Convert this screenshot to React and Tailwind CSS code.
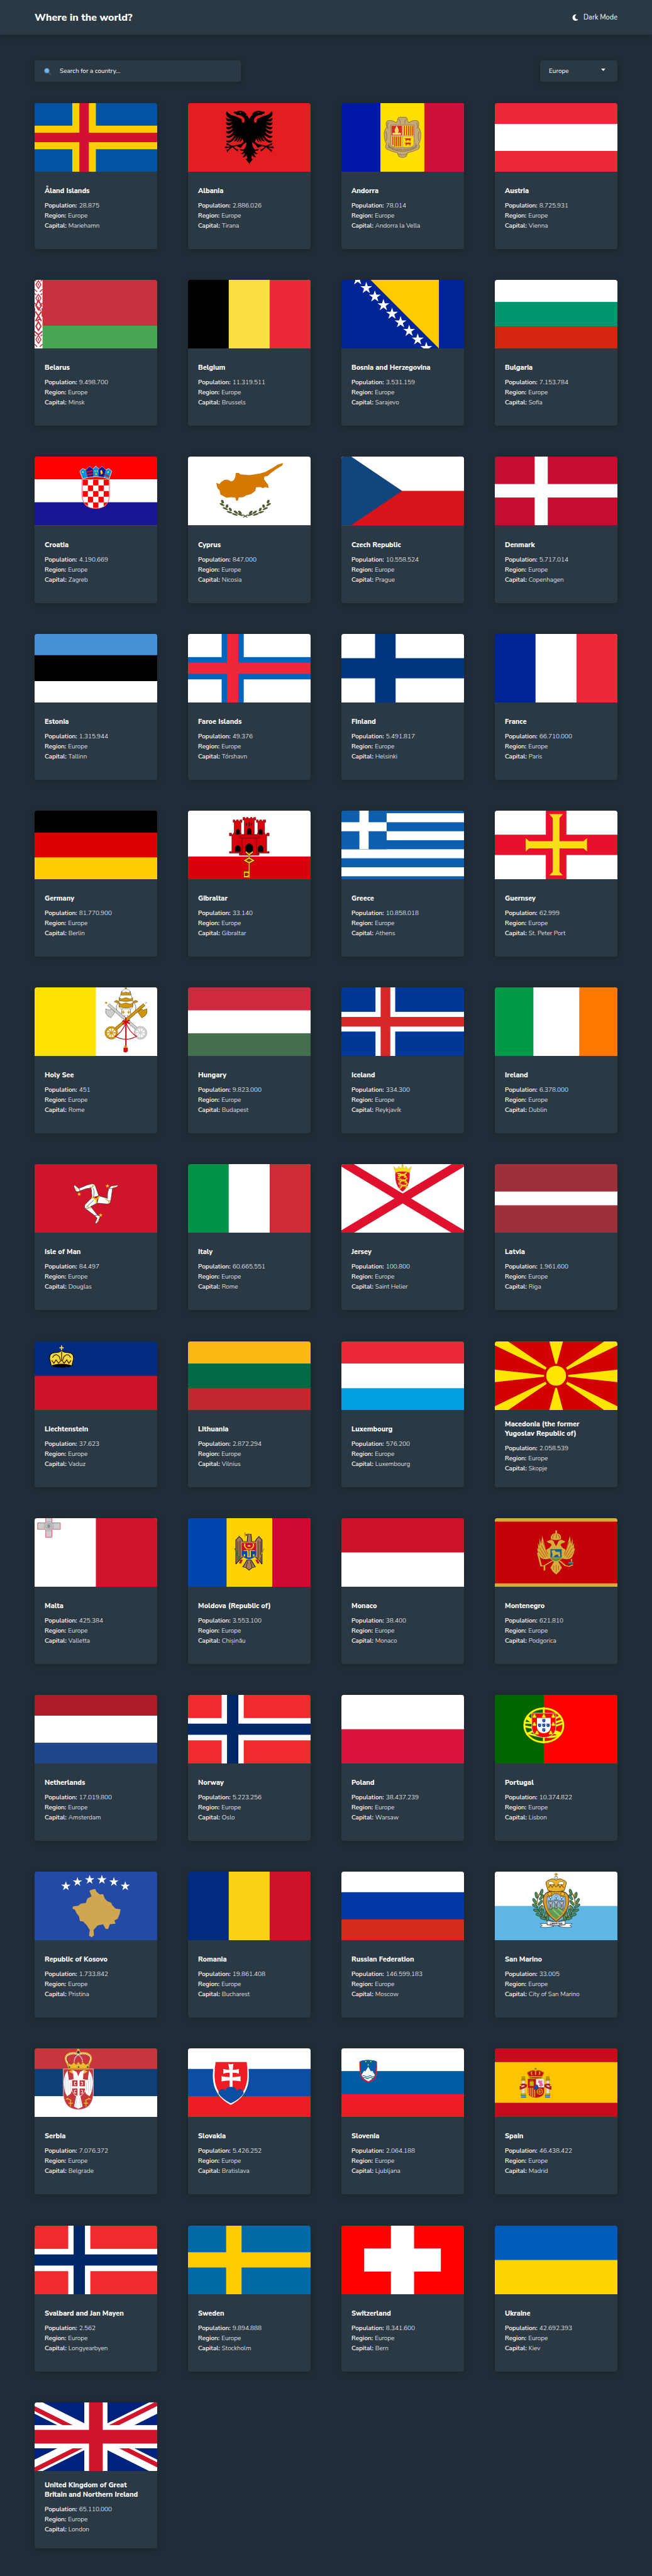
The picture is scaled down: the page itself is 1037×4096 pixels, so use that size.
import React from "react";
import { FaMoon } from "react-icons/fa";

/* Every flag is drawn on a 286 x 160 canvas. */

const R = ({ x = 0, y = 0, w = 286, h = 160, f, ...rest }) => (
  <rect x={x} y={y} width={w} height={h} fill={f} {...rest} />
);

// Horizontal bands: a = end of the first band, b = end of the second.
const Rows = ({ c, a, b = 160 }) => (
  <>
    <R f={c[0]} />
    <R y={a} h={160 - a} f={c[1]} />
    {c[2] && <R y={b} h={160 - b} f={c[2]} />}
  </>
);

const Cols = ({ c, a, b = 286 }) => (
  <>
    <R f={c[0]} />
    <R x={a} w={286 - a} f={c[1]} />
    {c[2] && <R x={b} w={286 - b} f={c[2]} />}
  </>
);

const Cross = ({ x1, x2, y1, y2, f }) => (
  <>
    <R x={x1} w={x2 - x1} f={f} />
    <R y={y1} h={y2 - y1} f={f} />
  </>
);

const Mirror = ({ cx, children }) => (
  <>
    {children}
    <g transform={`translate(${cx * 2} 0) scale(-1 1)`}>{children}</g>
  </>
);

const Star = ({ cx, cy, r, f = "#fff", ...rest }) => {
  const pts = Array.from({ length: 10 }, (_, i) => {
    const q = i % 2 ? r * 0.382 : r;
    const a = (Math.PI * i) / 5 - Math.PI / 2;
    return `${(cx + q * Math.cos(a)).toFixed(2)},${(cy + q * Math.sin(a)).toFixed(2)}`;
  }).join(" ");
  return <polygon points={pts} fill={f} {...rest} />;
};

const NorwayFlag = () => (
  <>
    <R f="#ef2b2d" />
    <Cross x1={78.5} x2={130} y1={54} y2={106} f="#fff" />
    <Cross x1={91} x2={117.5} y1={67} y2={93} f="#002868" />
  </>
);

const AlbaniaFlag = () => (
  <>
    <R f="#e41e20" />
    <Mirror cx={143}>
      <path d="M143.5 37 L138 29 L134 28 L137 26 L131 20 Q122 16 115 19 L107 20 Q106 25 113 25 L112 27 L120 28 Q130 31 132 38 Q133 45 129 46 Q125 46 125 37 L110 30 Q96 28 91 19 Q87 23 90 29 Q95 37 103 37 Q94 38 89 34 Q88 42 96 43 L104 42 Q95 48 89 44 Q88 52 97 52 L105 49 Q97 58 89 55 Q89 62 97 61 L106 57 Q98 68 89 65 Q89 72 97 71 L107 65 Q99 79 89 76 Q89 82 97 81 L109 74 Q100 91 89 87 Q90 93 97 92 Q106 89 113 77 Q112 84 107 89 Q114 91 118 79 Q118 87 113 90 Q119 92 123 79 Q123 87 119 91 Q124 91 127 83 L130 90 L124 95 L113 98 L115 101 L123 104 Q128 96 136 91 Q137 102 130 108 L121 107 Q122 112 130 111 Q128 117 123 117 Q126 121 133 116 Q131 124 127 125 Q133 128 137 120 Q137 127 139 128 L135 131 L143.5 142 Z" fill="#000" />
      <path d="M118 98 L87 104 M104 101 L92 96 M104 101 L91 111 M104 101 L114 110" stroke="#000" strokeWidth="2.6" fill="none" />
      <path d="M85 103 l5 -3 l1 5z M89 93 l6 2 l-4 4z M90 108 l6 1 l-5 6z M111 107 l6 1 l-2 5z" fill="#000" />
      <circle cx="122" cy="22" r="1.4" fill="#e41e20" />
    </Mirror>
  </>
);

const AndorraFlag = () => (
  <>
    <Cols c={["#0018a8", "#fedf00", "#d0103a"]} a={91} b={193.5} />
    <path d="M142.500 33 Q130 31 131 41 L128 46 Q118 38 108 41 Q102 46 106 56 Q99 64 100 76 Q101 88 105 95 Q100 104 107 108 Q118 113 131 116 Q131 126 142.500 127 Q154 126 154 116 Q167 113 178 108 Q185 104 180 95 Q185 88 185 76 Q186 64 179 56 Q183 46 177 41 Q167 38 157 46 L154 41 Q155 31 142.500 33Z" fill="#c6aa76" stroke="#8f744a" strokeWidth="1.5" />
    <Mirror cx={142.5}>
      <path d="M110 45 Q105 52 109 60 M104 66 Q108 78 104 88 M108 98 Q120 108 142 108 M134 38 Q138 42 137 48 M108 104 Q114 100 110 94 M133 118 Q138 122 142 120" fill="none" stroke="#8f744a" strokeWidth="1.5" />
    </Mirror>
    <path d="M115 51 H170 V97 Q168 103 156 104 H129 Q117 103 115 97Z" fill="#c7b37f" stroke="#8a7350" strokeWidth="1" />
    <R x={117} y={53} w={24} h={22} f="#d52b1e" />
    <R x={144} y={53} w={24} h={22} f="#fedf00" />
    <path d="M117 78 H141 V102 H129 Q118 101 117 96Z M144 78 H168 V96 Q167 101 156 102 H144Z" fill="#fedf00" />
    <path d="M147 53 V75 M152 53 V75 M157 53 V75 M162 53 V75 M166.500 53 V75 M120 78 V98 M124.500 78 V101 M129 78 V101 M133.500 78 V101 M138 78 V101" stroke="#d52b1e" strokeWidth="2.4" />
    <path d="M129 54 L133 63 L131 70 H127 L125 63Z M120 70 h18 v3 h-18z" fill="#fedf00" stroke="#fff" strokeWidth="1.4" />
    <path d="M147 82 h14 l2 2 -2 1 v4 h-2 v-3 h-7 v3 h-2 v-4z M147 92 h14 l2 2 -2 1 v4 h-2 v-3 h-7 v3 h-2 v-4z" fill="#d52b1e" />
    <path d="M111 103 Q125 111 142 112 Q160 111 174 103" fill="none" stroke="#6d5632" strokeWidth="3" strokeDasharray="1.5 1.500" />
  </>
);

const BelarusFlag = () => (
  <>
    <Rows c={["#c8313e", "#4aa657"]} a={107} />
    <R w={18.5} f="#fff" />
    {[0, 32, 128].map((y) => (
      <g key={y} fill="none" stroke="#c8313e" strokeWidth="2.2">
        <path d={`M9 ${y + 2} L15 ${y + 11} L9 ${y + 20} L3 ${y + 11}Z M9 ${y + 8} v6 M0 ${y + 22} L6 ${y + 28} M18.500 ${y + 22} L12 ${y + 28} M0 ${y} L4 ${y + 3} M18 ${y} L14 ${y + 3}`} />
      </g>
    ))}
    <path d="M9 48 L16 60 L9 70 L3 60Z M2 74 L9 84 L2 96 M16 74 L9 84 L16 96 M6 62 L14 72 M5 96 L13 90 M9 98 L15 108 L9 118 L3 108Z M0 120 L9 128 L18 120 M0 66 v20 M18 66 v20" fill="none" stroke="#c8313e" strokeWidth="3" />
  </>
);

const BosniaFlag = () => (
  <>
    <R f="#002395" />
    <polygon points="68,0 227.5,0 227.5,160" fill="#fecb00" />
    {[0, 1, 2, 3, 4, 5, 6, 7, 8].map((i) => (
      <Star key={i} cx={38 + i * 20} cy={-1 + i * 20} r={14.5} />
    ))}
  </>
);

const CroatiaFlag = () => (
  <>
    <Rows c={["#ff0000", "#fff", "#171796"]} a={53} b={106.5} />
    <clipPath id="hr-shield">
      <path d="M112 54 H173.500 V94 Q171 120 143 120 Q114 120 112 94Z" />
    </clipPath>
    <path d="M111 53 H174.500 V94 Q172 121.500 143 121.500 Q113 121.500 111 94Z" fill="#fff" stroke="#ff0000" strokeWidth="1" />
    <g clipPath="url(#hr-shield)">
      {[0, 1, 2, 3, 4].flatMap((r) =>
        [0, 1, 2, 3, 4].map((c) =>
          (r + c) % 2 === 0 ? <R key={`${r}${c}`} x={112 + c * 12.3} y={54 + r * 13.2} w={12.3} h={13.2} f="#ff0000" /> : null
        )
      )}
    </g>
    <path d="M112 52 L105.500 34 L112 28 L120 31 L128 23 L136 29 L143 22 L150 29 L158 23 L166 31 L173 28 L180 34 L174 52 Q143 41 112 52Z" fill="#0093dd" stroke="#fff" strokeWidth="1.2" />
    <path d="M120 31 L128 23 L136 29 L137 46 L124 48Z M150 29 L158 23 L166 31 L161 48 L149 46Z" fill="#171796" />
    <path d="M121 36 L136 33 M122 43 L136 40" stroke="#ff0000" strokeWidth="3" />
    <path d="M163 41 L174 47" stroke="#ff0000" strokeWidth="3" />
    <path d="M153 33 l4 -2 l2 8 l-4 3z M140 32 l2 0 l0 4 l-2 0z M145 32 l2 0 l0 4 l-2 0z M142 39 l3 0 l0 4 l-3 0z M111 34 l3 0 l0 4 l-3 0z M170 34 l3 0 l0 4 l-3 0z" fill="#f7db17" />
  </>
);

const CyprusFlag = () => (
  <>
    <R f="#fff" />
    <g transform="scale(.969 .523) translate(-452 -849)">
      <path d="M520 966 L528 972 L532 962 L540 953 L548 952 L556 960 L562 955 L566 940 L567 922 L574 922 L578 928 L600 932 L625 925 L638 918 L655 900 L668 885 L681 878 L679 888 L662 908 L650 925 L644 935 L636 938 L635 950 L645 975 L646 989 L638 985 L632 990 L627 985 L616 986 L614 1002 L605 1015 L592 1022 L585 1030 L574 1031 L572 1045 L568 1046 L566 1032 L555 1030 L545 1033 L530 1018 L528 1000 L523 990Z" fill="#d57800" />
      <g fill="#4e5b31">
        {[[535, 1050, 12], [534, 1063, 55], [546, 1070, -5], [542, 1081, 70], [554, 1085, 15], [552, 1097, 85], [567, 1097, 45], [565, 1107, 85], [578, 1108, 70], [577, 1098, 35]].map(([x, y, a], i) => (
          <g key={i}>
            <ellipse cx={x} cy={y} rx="3.2" ry="8" transform={`rotate(${-a / 1.5} ${x} ${y})`} />
            <ellipse cx={1180 - x} cy={y} rx="3.2" ry="8" transform={`rotate(${a / 1.5} ${1180 - x} ${y})`} />
          </g>
        ))}
        <path d="M585 1120 L596 1108 M595 1120 L584 1108" stroke="#4e5b31" strokeWidth="3" />
      </g>
    </g>
  </>
);

const CzechFlag = () => (
  <>
    <Rows c={["#fff", "#d7141a"]} a={80} />
    <polygon points="0,0 23,0 141.500,80 23,160 0,160" fill="#11457e" />
  </>
);

const GibraltarFlag = () => (
  <>
    <Rows c={["#fff", "#da000c"]} a={107} />
    <g transform="scale(.4145 .6313) translate(-864 -3)">
      <g fill="#da000c" stroke="#3a0004" strokeWidth="1.6">
        <path d="M1118 37 h10 v5 h8 v-5 h12 v5 h8 v-5 h12 v9 h-6 v46 h-38 v-46 h-6z" />
        <path d="M1249 37 h10 v5 h8 v-5 h12 v5 h8 v-5 h14 v9 h-6 v46 h-38 v-46 h-8z" />
        <path d="M1173 28 h12 v4 h8 v-4 h10 v4 h12 v-4 h10 v4 h8 v-4 h12 v10 h-8 v56 h-56 v-56 h-8z" />
        <path d="M1097 86 h12 v5 h10 v-5 h14 v5 h14 v-5 h16 v5 h92 v-5 h16 v5 h12 v-5 h14 v5 h10 v-5 h14 v10 h-14 v58 h14 v6 h-224 v-6 h14 v-58 h-14z" />
        <path d="M1168 103 H1250 V160 H1264 V168 H1153 V160 H1168Z" />
        <path d="M1155 97 H1264 V104 H1155Z" />
      </g>
      <path d="M1134 91 v-15 q10 -10 21 0 v15z M1262 91 v-15 q10 -10 21 0 v15z M1196 91 v-18 q12 -12 25 0 v18z M1129 155 v-16 q15 -16 31 0 v16z M1257 155 v-16 q15 -16 31 0 v16z M1187 157 v-22 q21 -22 43 0 v22z" fill="#000" />
      <path d="M1194 49 v9 M1208 46 v15 M1221 49 v9" stroke="#000" strokeWidth="5" />
      <path d="M1189 155 L1208 166 L1229 155 M1208 166 v12 M1184 187 L1208 178 L1232 187 L1208 195Z M1208 195 V251 M1206 230 H1181 V247 H1202 V240 M1202 236 V230" fill="none" stroke="#4a3800" strokeWidth="8" />
      <path d="M1189 155 L1208 166 L1229 155 M1208 166 v12 M1184 187 L1208 178 L1232 187 L1208 195Z M1208 195 V251 M1206 230 H1181 V247 H1202 V240 M1202 236 V230" fill="none" stroke="#f8d80e" strokeWidth="4.500" />
    </g>
  </>
);

const GreeceFlag = () => (
  <>
    <R f="#0d5eaf" />
    {[6, 48, 90, 132].map((y) => (
      <R key={y} y={y} h={21} f="#fff" />
    ))}
    <R w={105.5} h={90} f="#0d5eaf" />
    <R x={42} w={21.5} h={90} f="#fff" />
    <R y={27} w={105.5} h={21} f="#fff" />
  </>
);

const GuernseyFlag = () => (
  <>
    <R f="#fff" />
    <Cross x1={119} x2={167} y1={56} y2={103.5} f="#e8112d" />
    <path d="M127 8 H159 L151 17 V71 H207 L215 64 V95 L207 88 H151 V143 L159 151 H127 L135 143 V88 H80 L72 95 V64 L80 71 H135 V17Z" fill="#f9dd16" />
  </>
);

const HolySeeFlag = () => (
  <>
    <Cols c={["#ffe000", "#fff"]} a={143} />
    <g>
      <path d="M186 34 Q192 31 197 36 Q188 40 192 55 Q197 74 212 66 M241 34 Q235 31 230 36 Q239 40 235 55 Q230 74 215 66 M204 50 L202 68 M223 50 L225 68" fill="none" stroke="#777" strokeWidth="1.4" />
      <path d="M186 33 l5 -3 7 3 -4 4z M241 33 l-5 -3 -7 3 4 4z" fill="#c9920e" stroke="#5d4300" strokeWidth=".7" />
      <path d="M172 40 L242 100" stroke="#777" strokeWidth="7" />
      <path d="M172 40 L242 100" stroke="#cfcfcf" strokeWidth="5.200" />
      <path d="M256 40 L186 100" stroke="#6b4d00" strokeWidth="7" />
      <path d="M256 40 L186 100" stroke="#cf9710" strokeWidth="5.200" />
      <path d="M166 50 L174 53 L180 50 L187 58 L178 71 L170 66 L166 60Z" fill="#cfcfcf" stroke="#666" strokeWidth="1" />
      <path d="M262 50 L254 53 L248 50 L241 58 L250 71 L258 66 L262 60Z" fill="#cf9710" stroke="#5d4300" strokeWidth="1" />
      <circle cx="167" cy="36" r="2.500" fill="#cf9710" />
      <circle cx="260" cy="36" r="2.500" fill="#cfcfcf" />
      <circle cx="179" cy="106" r="12.500" fill="#fff" stroke="#cf9710" strokeWidth="4.500" />
      <circle cx="247" cy="106" r="12.500" fill="#fff" stroke="#cfcfcf" strokeWidth="4.500" />
      <path d="M179 95 V117 M168 106 H190 M171 98 L187 114 M187 98 L171 114" stroke="#cf9710" strokeWidth="2" />
      <path d="M247 95 V117 M236 106 H258 M239 98 L255 114 M255 98 L239 114" stroke="#cfcfcf" strokeWidth="2" />
      <circle cx="179" cy="106" r="15" fill="none" stroke="#7a5a08" strokeWidth=".8" />
      <circle cx="247" cy="106" r="15" fill="none" stroke="#888" strokeWidth=".8" />
      <path d="M213 0 V5 M210 2 H216" stroke="#b07d05" strokeWidth="2" />
      <path d="M204 8 Q213 0 222 8 L229 28 V44 Q228 51 222 50 H204 Q198 51 197 44 V28Z" fill="#fff" stroke="#777" strokeWidth="1" />
      <path d="M203 9 L206 13 L213 11 L220 13 L223 9 L225 18 H201Z M197 24 L203 27 L213 24 L223 27 L229 24 L228 31 Q213 35 198 31Z M197 36 L203 39 L213 36 L223 39 L229 36 V45 Q213 51 197 45Z" fill="#cf9710" stroke="#5d4300" strokeWidth=".8" />
      <path d="M203 58 h7 M206.500 54 v8 M216 58 h7 M219.500 54 v8" stroke="#cf9710" strokeWidth="2.200" />
      <path d="M213 70 V140 M205 78 L222 84 M222 76 L205 86" stroke="#d0000c" strokeWidth="3" />
      <path d="M213 82 Q204 106 188 114 Q213 128 238 114 Q222 106 213 82" fill="none" stroke="#d0000c" strokeWidth="1.800" />
      <path d="M208 141 h9 v8 q-4 4 -9 1z" fill="#f00000" stroke="#700" strokeWidth=".8" />
      <path d="M209 136 h7 v4 h-7z" fill="#cf9710" />
    </g>
  </>
);

const ManFlag = () => (
  <>
    <R f="#cf142b" />
    <g stroke="#3a2c2c" strokeWidth="1" strokeLinejoin="round">
      <path d="M134 78 L132 56 L122 57 L104 63 Q102 66 96 63 L91 51 L94 49 L103 57 L122 49 L134 46 Q140 46 142 52 L150 74Z" fill="#fff" />
      <path d="M150 74 L170 80 Q169 68 173 57 L179 51 L194 49 L195 51 L190 54 L182 56 L178 84 Q177 92 170 93 L146 91Z" fill="#fff" />
      <path d="M134 78 L118 94 Q114 101 120 105 L140 120 L146 126 L141 137 L144 139 L149 133 L153 122 L146 118 L131 99 L146 91 L144 83Z" fill="#fff" />
      <path d="M128 54 Q134 57 138 50 M104 57 L106 62 M166 82 Q172 88 177 86 M173 57 L182 57 M119 103 Q130 104 133 97 M140 120 L148 119 M137 78 Q141 60 136 56 M121 100 L138 84" fill="none" />
    </g>
    <path d="M133 77 L144 82 L152 75 M144 82 V91" fill="none" stroke="#e7c71a" strokeWidth="3" />
    <path d="M130 53 Q134 57 136 49 M168 82 L175 91 M122 99 l9 4 M95 56 l3 4 M184 51 l2 4 M145 131 l4 2" fill="none" stroke="#e7c71a" strokeWidth="2" />
    <Star cx={104} cy={70} r={5} f="#f9dd16" />
    <Star cx={170} cy={51} r={5} f="#f9dd16" />
    <Star cx={154} cy={119} r={5} f="#f9dd16" />
  </>
);

const JerseyFlag = () => (
  <>
    <R f="#fff" />
    <path d="M-20 -17.700 L306 177.900 M306 -17.700 L-20 177.900" stroke="#df112d" strokeWidth="20" />
    <path d="M126 17 H159 Q162 52 142.500 64 Q123 52 126 17Z" fill="#df112d" />
    <path d="M126 20 L122 6 L130 12 L134 5 L138 11 L142.500 3 L147 11 L151 5 L155 12 L163 6 L159 20 Q142 14 126 20Z M141 0 h3 v5 h-3z" fill="#f9dd16" stroke="#a7922c" strokeWidth=".6" />
    {[22, 35, 47].map((y, i) => (
      <path key={y} transform={`translate(${i * 1.500} 0)`} d={`M130 ${y} h6 l3 2 h9 l2 -3 h3 M132 ${y + 4} h16 l3 4 h-5 M138 ${y + 5} l-3 4 h-4`} fill="none" stroke="#f9dd16" strokeWidth={2.8 - i * 0.3} />
    ))}
  </>
);

const LiechtensteinFlag = () => (
  <>
    <Rows c={["#002b7f", "#ce1126"]} a={80} />
    <path d="M63 9 V22 M58 15 H68" stroke="#ffd83d" strokeWidth="2.500" />
    <path d="M39 56 L35 40 Q34 27 48 26 Q58 26 63 21 Q68 26 78 26 Q92 27 91 40 L87 56 Q63 63 39 56Z" fill="#ffd83d" stroke="#000" strokeWidth="1.500" />
    <path d="M42 38 Q44 31 51 31 Q59 33 60 44 M84 38 Q82 31 75 31 Q67 33 66 44 M63 24 V42 M40 44 l5 7 5 -8 6 8 7 -8 6 8 6 -8 5 8 5 -7" fill="none" stroke="#3a2d00" strokeWidth="2" />
    <path d="M41 55 Q63 49 85 55 L83 59 Q63 63 43 59Z" fill="#000" />
  </>
);

const MacedoniaFlag = () => (
  <>
    <R f="#d20000" />
    <path d="M0 65.500 L115 78 V82 L0 95Z M286 65.500 L171 78 V82 L286 95Z M127 0 H159 L145 52 H141Z M127 160 H159 L145 108 H141Z M0 0 H31 L121 61 L118 66 L0 9Z M286 0 H255 L166 61 L169 66 L286 9Z M0 160 H31 L121 99 L118 94 L0 151Z M286 160 H255 L166 99 L169 94 L286 151Z" fill="#ffe600" />
    <circle cx="143" cy="80" r="25.500" fill="#d20000" />
    <circle cx="143" cy="80" r="23.200" fill="#ffe600" />
  </>
);

const MaltaFlag = () => (
  <>
    <Cols c={["#fff", "#cf142b"]} a={143} />
    <path d="M26 -2 H40.500 V11 H60 V26 H40.500 V44.500 H26 V26 H7 V11 H26Z" fill="#ccc" stroke="#e0354b" strokeWidth="1.200" />
    <circle cx="33" cy="19" r="11" fill="#c4c4c4" stroke="#999" strokeWidth="1" />
    <circle cx="33" cy="19" r="7" fill="none" stroke="#8d8d8d" strokeWidth="1.500" strokeDasharray="2 1.500" />
    <path d="M30 15 l5 -1 2 5 -3 5 -4 -2z" fill="#8d8d8d" />
  </>
);

const MoldovaFlag = () => (
  <>
    <Cols c={["#0046ae", "#ffd200", "#cc092f"]} a={90} b={196.5} />
    <g transform="scale(.639 .3333) translate(0 -18)">
      <g fill="#a77b57" stroke="#000" strokeWidth="2.500">
        <path d="M175 340 V170 L187 146 L197 165 L200 180 L216 182 L218 140 L210 136 L220 128 L230 130 L232 182 L246 180 L250 165 L259 146 L270 170 V340 L258 310 L246 290 H200 L188 310Z" />
        <path d="M216 310 L200 360 L212 365 L223 382 L234 365 L246 360 L230 310Z" />
      </g>
      <path d="M182 180 V320 M190 175 V300 M264 180 V320 M256 175 V300 M218 320 L212 362 M228 320 L234 362" stroke="#000" strokeWidth="2" />
      <path d="M196 190 H249 V245 H196Z" fill="#cc092f" />
      <path d="M196 245 H249 V275 Q246 295 223 306 Q199 295 196 275Z" fill="#0046ae" />
      <path d="M207 195 Q204 232 223 234 Q242 232 239 195 M213 240 L219 246 V290 H227 V246 L233 240 M204 245 h10 M234 245 h10 M206 270 v16 M240 270 v16" fill="none" stroke="#ffd200" strokeWidth="5" />
      <circle cx="223" cy="212" r="6" fill="#ffd200" />
      <path d="M195 190 H250 V275 Q246 295 223 308 Q199 295 195 275Z" fill="none" stroke="#d9a33c" strokeWidth="2" />
      <path d="M196 308 L190 335 M250 308 L257 335" stroke="#cc092f" strokeWidth="8" />
      <path d="M172 230 L178 260 L184 290 L192 318" fill="none" stroke="#0f7a3c" strokeWidth="6" strokeDasharray="9 5" />
      <path d="M278 230 L258 310 M208 115 V150 M203 127 H214" stroke="#b99400" strokeWidth="3" />
    </g>
  </>
);

const MontenegroFlag = () => (
  <>
    <R f="#d3ae3b" />
    <R y={8} h={144} f="#c40308" />
    <g transform="scale(.639 .3333) translate(-1119 -18)" fill="#d3ae3b">
      <path d="M1324 165 Q1320 130 1340 124 V104 H1346 V124 Q1364 130 1360 165 Q1342 176 1324 165Z" />
      <path d="M1331 160 Q1328 140 1338 132 M1343 130 V160 M1354 160 Q1357 140 1347 132" fill="none" stroke="#c40308" strokeWidth="2" />
      <Mirror cx={1342.5}>
        <path d="M1343 215 L1337 195 Q1335 170 1322 170 L1308 182 L1316 192 Q1328 196 1325 210 L1318 226 L1306 240 L1292 142 L1288 200 L1282 160 L1282 215 L1276 190 L1278 235 L1273 225 L1277 260 L1283 285 Q1288 305 1306 305 L1322 300 L1330 320 L1343 330Z" />
        <path d="M1288 205 L1310 285 M1282 225 L1304 292 M1279 250 L1298 298 M1294 180 L1312 270" stroke="#c40308" strokeWidth="1.800" fill="none" />
      </Mirror>
      <path d="M1334 325 L1322 365 L1330 390 L1343 412 L1355 390 L1364 365 L1352 325Z" />
      <path d="M1334 350 v30 M1343 345 v50 M1352 350 v30" stroke="#c40308" strokeWidth="1.500" />
      <path d="M1328 318 L1300 350 L1288 352 L1276 260 M1300 348 V384 M1357 318 L1376 350 L1390 356 L1404 345" fill="none" stroke="#d3ae3b" strokeWidth="6" />
      <circle cx="1397" cy="332" r="10" fill="#1d5e91" />
      <path d="M1388 330 h18 M1399 303 v20" stroke="#d3ae3b" strokeWidth="4" />
      <path d="M1318 228 H1367 V290 Q1365 312 1343 324 Q1320 312 1318 290Z" />
      <path d="M1322 235 H1363 V293 H1322Z" fill="#1d5e91" />
      <path d="M1322 297 H1363 Q1361 310 1343 320 Q1324 310 1322 297Z" fill="#6d8c3e" />
      <path d="M1326 246 l10 -6 6 14 14 0 2 34 h-6 l-2 -16 -10 2 -6 16 h-6 l2 -20z" />
    </g>
  </>
);

const PortugalFlag = () => (
  <>
    <Cols c={["#006600", "#ff0000"]} a={114.3} />
    <g transform="translate(114.3 71)">
      <g fill="none">
        <g stroke="#8a8500" strokeWidth="5.200">
          <ellipse rx="45.500" ry="39.500" />
          <path d="M0 -42 V42 M-45 -6 Q0 -2 40 -22 M-46 2 Q0 14 45 -5 M-40 20 Q10 -2 43 -12 M-40 18 Q10 34 38 22" />
        </g>
        <g stroke="#ffff00" strokeWidth="3.600">
          <ellipse rx="45.500" ry="39.500" />
          <path d="M0 -42 V42 M-45 -6 Q0 -2 40 -22 M-46 2 Q0 14 45 -5 M-40 20 Q10 -2 43 -12 M-40 18 Q10 34 38 22" />
        </g>
        <path d="M-39 -18 Q-8 6 38 20" stroke="#ffff00" strokeWidth="9" />
      </g>
      <path d="M-28 -28.500 H28 V6 Q26 27 0 28.500 Q-26 27 -28 6Z" fill="#ff0000" stroke="#ccc" strokeWidth="1.500" />
      <path d="M-16 -17.500 H16 V4 Q15 17 0 18.500 Q-15 17 -16 4Z" fill="#fff" />
      {[[0, -11], [-10, 0], [0, 0], [10, 0], [0, 11]].map(([x, y]) => (
        <g key={`${x},${y}`}>
          <path d={`M${x - 3.5} ${y - 4} h7 v5 q0 3 -3.500 3 q-3.500 0 -3.500 -3z`} fill="#003399" />
          <path d={`M${x - 1.5} ${y - 2} h.1 M${x + 1.5} ${y - 2} h.1 M${x} ${y} h.1 M${x - 1} ${y + 2} h.1`} stroke="#fff" strokeWidth="1.200" strokeLinecap="round" />
        </g>
      ))}
      {[[-22, -22], [0, -22], [22, -22], [-22, -3], [22, -3], [-16, 17], [16, 17]].map(([x, y]) => (
        <path key={`${x},${y}`} d={`M${x - 4} ${y + 4} v-4 h2 v-4 h4 v4 h2 v4z`} fill="#ffff00" stroke="#a08f00" strokeWidth=".8" />
      ))}
    </g>
  </>
);

const KosovoFlag = () => (
  <>
    <R f="#244aa5" />
    <g transform="scale(.969 .523) translate(-83 -880)">
      <path d="M215 965 L222 960 L229 957 L232 970 L240 982 L248 980 L252 1000 L258 1012 L267 1018 L270 1030 L278 1045 L290 1048 L288 1068 L283 1090 L275 1098 L278 1112 L264 1115 L260 1136 L254 1135 L248 1115 L235 1120 L225 1140 L226 1165 L220 1173 L214 1165 L216 1140 L208 1118 L200 1103 L192 1100 L190 1080 L184 1065 L180 1050 L174 1045 L176 1035 L188 1032 L195 1022 L206 1020 L210 1000 L220 990Z" fill="#d0a650" />
    </g>
    {[[73, 34], [100, 24], [128.5, 19], [157, 19], [185, 24], [211.5, 34]].map(([x, y]) => (
      <Star key={x} cx={x} cy={y} r={11.5} />
    ))}
  </>
);

const SanMarinoFlag = () => (
  <>
    <Rows c={["#fff", "#5eb6e4"]} a={80} />
    <Mirror cx={143}>
      <path d="M137 117 Q112 108 98 84 Q96 66 108 46" fill="none" stroke="#5a3a1c" strokeWidth="1.500" />
      <g fill="#4f8a5b" stroke="#14351c" strokeWidth="1">
        {[[109, 48, 15], [97, 55, -10], [109, 60, 35], [93, 69, -30], [106, 73, 40], [94, 80, -60], [107, 85, 30], [97, 91, -70], [111, 94, 15], [103, 101, -75], [119, 100, 5], [113, 109, -75], [123, 108, 10]].map(([x, y, a], i) => (
          <ellipse key={i} cx={x} cy={y} rx="3" ry="7.500" transform={`rotate(${a} ${x} ${y})`} />
        ))}
      </g>
      <g fill="#e08a1e">
        <circle cx="101" cy="54" r="2" />
        <circle cx="99" cy="72" r="2" />
        <circle cx="111" cy="83" r="2" />
        <circle cx="120" cy="102" r="2" />
      </g>
    </Mirror>
    <path d="M143 46 Q115 42 113 65 Q113 96 143 116 Q173 96 173 65 Q171 42 143 46Z" fill="#dc9a2a" stroke="#4a3208" strokeWidth="1.500" />
    <path d="M122 58 Q130 62 138 52 H148 Q156 62 164 58 Q170 92 143 110 Q116 92 122 58Z" fill="#8fc5ea" stroke="#4a3208" strokeWidth="1" />
    <circle cx="128" cy="52" r="4.500" fill="#f0b73a" stroke="#4a3208" />
    <circle cx="158" cy="52" r="4.500" fill="#f0b73a" stroke="#4a3208" />
    <path d="M125 86 Q143 78 161 86 Q157 102 143 110 Q129 102 125 86Z" fill="#5f9e53" />
    <path d="M135 88 L152 104 M146 84 L158 95" stroke="#8fc47c" strokeWidth="3" />
    {[130, 143, 156].map((x, i) => (
      <g key={x} transform={`translate(${x} ${i === 1 ? 66 : 68})`}>
        <path d="M-5 0 h3 v2 h4 v-2 h3 v5 h-1.500 v14 h-7 v-14 h-1.500z" fill="#bdbdbd" stroke="#222" strokeWidth="1" />
        <path d="M0 0 V-7" stroke="#333" strokeWidth="1.200" />
        <circle cy="-8" r="2.500" fill="#e8e8e8" stroke="#333" strokeWidth=".8" />
        <path d="M0 8 v8" stroke="#222" strokeWidth="1.500" />
      </g>
    ))}
    <path d="M124 44 L120 30 Q117 22 126 20 Q135 14 143 20 Q151 14 160 20 Q169 22 166 30 L162 44 Q143 50 124 44Z" fill="#e9b22c" stroke="#4a3208" strokeWidth="1.300" />
    <path d="M126 30 Q123 25 129 23 Q136 22 139 30Z M160 30 Q163 25 157 23 Q150 22 147 30Z" fill="#fff" stroke="#4a3208" strokeWidth=".8" />
    <path d="M125 38 l5 -7 4 6 4 -7 5 6 5 -6 4 7 4 -6 5 7" fill="none" stroke="#7a5208" strokeWidth="1.500" />
    <circle cx="143" cy="14" r="3.500" fill="#dfe3e8" stroke="#4a3208" strokeWidth=".8" />
    <path d="M143 3 V11 M139 6.500 H147" stroke="#c48a12" strokeWidth="2.600" />
    <path d="M135 128 L151 115 M151 128 L135 115" stroke="#5a3a1c" strokeWidth="2" />
    <path d="M122 115 Q143 119 164 115 V124 Q143 127 122 124Z M122 121 L106 121 L111 126 L106 129 Q118 132 135 128 L135 125 L122 124Z M164 121 L180 121 L175 126 L180 129 Q168 132 151 128 L151 125 L164 124Z" fill="#fff" stroke="#333" strokeWidth="1" />
    <text x="143" y="123" textAnchor="middle" fontFamily="Liberation Sans" fontWeight="700" fontSize="6" fill="#111">LIBERTAS</text>
  </>
);

const SerbiaFlag = () => (
  <>
    <Rows c={["#c6363c", "#0c4076", "#fff"]} a={48} b={111.5} />
    <path d="M67 48 H137 V108 Q134 142 102 143 Q70 142 67 108Z" fill="#c6363c" stroke="#fff" strokeWidth="1" />
    <Mirror cx={102}>
      <path d="M102.500 66 L98 55 L90 51 L83 54 L90 58 L91 72 L80 74 L77 52 Q69 60 68 78 Q68 100 76 112 L84 106 L88 96 Q90 108 97 112 L92 136 L102.500 141Z" fill="#fff" />
      <path d="M73 66 V100 M78 72 V104 M83 80 V100 M99 116 L96 136" stroke="#aaa" strokeWidth=".8" />
      <path d="M88 51 l-6 3 6 4z M76 116 l10 6 M84 122 v14 M79 128 h10 M73 118 h6" stroke="#edb92e" strokeWidth="2" fill="#edb92e" />
    </Mirror>
    <path d="M87 74 H118 V96 Q116 109 102 112 Q89 109 87 96Z" fill="#c6363c" stroke="#fff" strokeWidth="1" />
    <path d="M102.500 74 V112 M87 91 H118" stroke="#fff" strokeWidth="5" />
    <path d="M97 79 h-4 v6 h4 M108 79 h4 v6 h-4 M97 98 h-4 v6 h4 M108 98 h4 v6 h-4" fill="none" stroke="#fff" strokeWidth="1.600" />
    <path d="M81 47 L77 36 Q68 22 76 15 Q88 7 102 13 Q116 7 128 15 Q136 22 127 36 L124 47Z" fill="none" stroke="#edb92e" strokeWidth="4" />
    <path d="M81 40 L77 34 Q70 22 77 17 Q88 10 102 15 Q116 10 127 17 Q134 22 127 34 L124 40 M93 38 Q90 22 102 15 Q114 22 111 38" fill="none" stroke="#fff" strokeWidth="2" strokeDasharray="2.500 1.200" />
    <path d="M80 47 L78 34 L86 38 L92 32 L97 38 L102 31 L108 38 L113 32 L119 38 L127 34 L125 47Z" fill="#edb92e" stroke="#7a5a10" strokeWidth=".8" />
    <circle cx="102" cy="9" r="4" fill="#0c4076" stroke="#edb92e" strokeWidth="1.500" />
    <path d="M102 1 V6 M99 3 H105 M84 44 h3 M96 44 h3 M108 44 h3 M119 44 h3" stroke="#edb92e" strokeWidth="2" />
    <path d="M80 43.500 h3 M122 43.500 h3 M101 43.500 h3" stroke="#0c4076" strokeWidth="3" />
  </>
);

const SlovakiaFlag = () => (
  <>
    <Rows c={["#fff", "#0b4ea2", "#ee1c25"]} a={48} b={111.5} />
    <path d="M62 32 H139 Q142 45 142 66 Q142 110 100 132 Q58 110 58 66 Q58 45 62 32Z" fill="#fff" />
    <path d="M64.500 32 H137 Q139 48 138.500 66 Q137 107 100 128 Q63 107 62 66 Q61.500 48 64.500 32Z" fill="#ee1c25" />
    <path d="M71 105 Q71 97 79 95 Q86 95 88 99 Q89 89 100 89 Q112 89 113 99 Q116 95 122 95 Q129 97 130 105 Q121 119 100 128 Q80 119 71 105Z" fill="#0b4ea2" />
    <path d="M94 36 Q100 38 106 36 L104.500 50 Q113 50 119 48 Q118 53 119 59 Q112 57 104 57 V67 Q115 67 123 65 Q122 71 123 77 Q113 75 104 75 V90 H97 V75 Q88 75 78 77 Q79 71 78 65 Q87 67 97 67 V57 Q89 57 82 59 Q83 53 82 48 Q89 50 96.500 50Z" fill="#fff" />
  </>
);

const SloveniaFlag = () => (
  <>
    <Rows c={["#fff", "#005da4", "#ed1c24"]} a={53} b={107} />
    <path d="M42 31 Q48 27 62.500 27 Q77 27 83 31 Q85 65 76 73 Q70 77 63 80 Q55 77 49 72 Q41 62 42 31Z" fill="#ed1c24" />
    <path d="M44 30 Q50 27 62.500 27 Q75 27 81 30 Q83 61 74.500 70 Q70 74 63 77 Q56 74 51 70 Q43 60 44 30Z" fill="#005da4" />
    <path d="M47 62 L53 52 L56 54 L62.500 43 L69 54 L72 52 L78 62 Q76 70 63 77 Q50 71 47 62Z" fill="#fff" />
    <path d="M49 65 q3.500 -2.500 7 0 t7 0 t7 0 t7 0 M50 69 q3.500 -2.500 7 0 t7 0 t7 0 t5 0" fill="none" stroke="#005da4" strokeWidth="1.500" />
    <Star cx={57} cy={31} r={2.6} f="#fd0" />
    <Star cx={68.500} cy={31} r={2.6} f="#fd0" />
    <Star cx={62.500} cy={38.500} r={2.6} f="#fd0" />
  </>
);

const SpainFlag = () => (
  <>
    <Rows c={["#c60b1e", "#ffc400", "#c60b1e"]} a={32} b={127} />
    <Mirror cx={95}>
      <path d="M63 74 h7 v36 h-7z" fill="#ddd" stroke="#888" strokeWidth=".6" />
      <path d="M61 106 h11 v4 h-11z M62 72 h9 v3 h-9z M63 66 h7 v5 h-7z" fill="#c7a000" stroke="#6a5200" strokeWidth=".6" />
      <path d="M61 111 h12 M61 114 h12" stroke="#2f6cb5" strokeWidth="2" />
      <path d="M61 86 Q67 82 75 87 M60 96 V88 M74 88 Q67 92 60 94" fill="none" stroke="#b8141f" strokeWidth="4" />
    </Mirror>
    <path d="M77 71 H115 V103 Q113 114 96 115 Q79 114 77 103Z" fill="#c60b1e" stroke="#ad8a00" strokeWidth="1" />
    <path d="M96 71 H115 V91 H96Z" fill="#eee" />
    <path d="M102 74 l6 2 3 -2 -1 6 3 6 -5 4 -5 -2 2 -6 -4 -2z" fill="#db6ba0" />
    <path d="M81 77 h2 v-3 h2 v3 h2 v-3 h2 v3 h2 v11 h-10z" fill="#c8b100" stroke="#5b4a00" strokeWidth=".6" />
    <path d="M79.500 92 V107 M84 92 V111 M88.500 92 V113 M93 92 V113" stroke="#ffd500" strokeWidth="2" />
    <circle cx="105" cy="101" r="6.500" fill="none" stroke="#e3c800" strokeWidth="1.500" />
    <path d="M98.500 101 h13 M105 95 v13 M100 96 l10 10 M110 96 l-10 10" stroke="#e3c800" strokeWidth=".9" />
    <ellipse cx="96" cy="91" rx="5.200" ry="6" fill="#0b4ea2" stroke="#c60b1e" strokeWidth="1.500" />
    <path d="M81 69 L78 62 Q73 56 80 54 Q88 49 95 53 Q102 49 110 54 Q117 56 112 62 L109 69 Q95 72 81 69Z" fill="#c60b1e" stroke="#b28a00" strokeWidth="2" />
    <path d="M80 66 H110 M95 53 V62 M86 54 Q84 58 87 62 M104 54 Q106 58 103 62" stroke="#d8b400" strokeWidth="2.500" fill="none" />
    <path d="M95 45 V51 M92.500 47.500 H97.500" stroke="#8a6d00" strokeWidth="1.500" />
    <circle cx="95" cy="51" r="2" fill="#c8b100" />
  </>
);

const UKFlag = () => (
  <>
    <clipPath id="uk-diagonals">
      <path d="M143 80 H303 V160Z M143 80 V160 H-17Z M143 80 H-17 V0Z M143 80 V0 H303Z" />
    </clipPath>
    <R f="#00247d" />
    <path d="M-17 0 L303 160 M303 0 L-17 160" stroke="#fff" strokeWidth="32" />
    <path d="M-17 0 L303 160 M303 0 L-17 160" clipPath="url(#uk-diagonals)" stroke="#cf142b" strokeWidth="21" />
    <Cross x1={116} x2={170} y1={53} y2={107} f="#fff" />
    <Cross x1={127} x2={159} y1={64} y2={96} f="#cf142b" />
  </>
);

const NordicSingle = ({ bg, f, ...cross }) => (
  <>
    <R f={bg} />
    <Cross f={f} {...cross} />
  </>
);

const countries = [
  ["Åland Islands", "28.875", "Mariehamn", <><R f="#0053a5" /><Cross x1={88} x2={143} y1={52.5} y2={107.5} f="#ffce00" /><Cross x1={104.5} x2={126.5} y1={69} y2={91} f="#d21034" /></>],
  ["Albania", "2.886.026", "Tirana", <AlbaniaFlag />],
  ["Andorra", "78.014", "Andorra la Vella", <AndorraFlag />],
  ["Austria", "8.725.931", "Vienna", <Rows c={["#ed2939", "#fff", "#ed2939"]} a={48.5} b={111.5} />],
  ["Belarus", "9.498.700", "Minsk", <BelarusFlag />],
  ["Belgium", "11.319.511", "Brussels", <Cols c={["#000", "#fae042", "#ed2939"]} a={95} b={190.5} />],
  ["Bosnia and Herzegovina", "3.531.159", "Sarajevo", <BosniaFlag />],
  ["Bulgaria", "7.153.784", "Sofia", <Rows c={["#fff", "#00966e", "#d62612"]} a={51.5} b={108.5} />],
  ["Croatia", "4.190.669", "Zagreb", <CroatiaFlag />],
  ["Cyprus", "847.000", "Nicosia", <CyprusFlag />],
  ["Czech Republic", "10.558.524", "Prague", <CzechFlag />],
  ["Denmark", "5.717.014", "Copenhagen", <NordicSingle bg="#c60c30" f="#fff" x1={93} x2={123.5} y1={64} y2={95.5} />],
  ["Estonia", "1.315.944", "Tallinn", <Rows c={["#4891d9", "#000", "#fff"]} a={49.5} b={110} />],
  ["Faroe Islands", "49.376", "Tórshavn", <><R f="#fff" /><Cross x1={78.5} x2={130} y1={54} y2={106} f="#0065bd" /><Cross x1={91} x2={117.5} y1={67} y2={93} f="#ed2939" /></>],
  ["Finland", "5.491.817", "Helsinki", <NordicSingle bg="#fff" f="#003580" x1={78.5} x2={126.5} y1={56.5} y2={103.5} />],
  ["France", "66.710.000", "Paris", <Cols c={["#002395", "#fff", "#ed2939"]} a={95} b={190.5} />],
  ["Germany", "81.770.900", "Berlin", <Rows c={["#000", "#dd0000", "#ffce00"]} a={51} b={109} />],
  ["Gibraltar", "33.140", "Gibraltar", <GibraltarFlag />],
  ["Greece", "10.858.018", "Athens", <GreeceFlag />],
  ["Guernsey", "62.999", "St. Peter Port", <GuernseyFlag />],
  ["Holy See", "451", "Rome", <HolySeeFlag />],
  ["Hungary", "9.823.000", "Budapest", <Rows c={["#cd2a3e", "#fff", "#436f4d"]} a={53.5} b={107} />],
  ["Iceland", "334.300", "Reykjavík", <><R f="#003897" /><Cross x1={79.5} x2={125.5} y1={57} y2={103} f="#fff" /><Cross x1={91.5} x2={114} y1={69} y2={91.5} f="#d72828" /></>],
  ["Ireland", "6.378.000", "Dublin", <Cols c={["#009a49", "#fff", "#ff7900"]} a={90} b={197} />],
  ["Isle of Man", "84.497", "Douglas", <ManFlag />],
  ["Italy", "60.665.551", "Rome", <Cols c={["#009246", "#fff", "#ce2b37"]} a={95} b={190.5} />],
  ["Jersey", "100.800", "Saint Helier", <JerseyFlag />],
  ["Latvia", "1.961.600", "Riga", <Rows c={["#9e3039", "#fff", "#9e3039"]} a={64} b={96} />],
  ["Liechtenstein", "37.623", "Vaduz", <LiechtensteinFlag />],
  ["Lithuania", "2.872.294", "Vilnius", <Rows c={["#fdb913", "#006a44", "#c1272d"]} a={51.5} b={109} />],
  ["Luxembourg", "576.200", "Luxembourg", <Rows c={["#ed2939", "#fff", "#00a1de"]} a={51.5} b={109} />],
  ["Macedonia (the former Yugoslav Republic of)", "2.058.539", "Skopje", <MacedoniaFlag />],
  ["Malta", "425.384", "Valletta", <MaltaFlag />],
  ["Moldova (Republic of)", "3.553.100", "Chișinău", <MoldovaFlag />],
  ["Monaco", "38.400", "Monaco", <Rows c={["#ce1126", "#fff"]} a={80} />],
  ["Montenegro", "621.810", "Podgorica", <MontenegroFlag />],
  ["Netherlands", "17.019.800", "Amsterdam", <Rows c={["#ae1c28", "#fff", "#21468b"]} a={48.5} b={111.5} />],
  ["Norway", "5.223.256", "Oslo", <NorwayFlag />],
  ["Poland", "38.437.239", "Warsaw", <Rows c={["#fff", "#dc143c"]} a={80} />],
  ["Portugal", "10.374.822", "Lisbon", <PortugalFlag />],
  ["Republic of Kosovo", "1.733.842", "Pristina", <KosovoFlag />],
  ["Romania", "19.861.408", "Bucharest", <Cols c={["#002b7f", "#fcd116", "#ce1126"]} a={95} b={190.5} />],
  ["Russian Federation", "146.599.183", "Moscow", <Rows c={["#fff", "#0039a6", "#d52b1e"]} a={48} b={111.5} />],
  ["San Marino", "33.005", "City of San Marino", <SanMarinoFlag />],
  ["Serbia", "7.076.372", "Belgrade", <SerbiaFlag />],
  ["Slovakia", "5.426.252", "Bratislava", <SlovakiaFlag />],
  ["Slovenia", "2.064.188", "Ljubljana", <SloveniaFlag />],
  ["Spain", "46.438.422", "Madrid", <SpainFlag />],
  ["Svalbard and Jan Mayen", "2.562", "Longyearbyen", <NorwayFlag />],
  ["Sweden", "9.894.888", "Stockholm", <NordicSingle bg="#006aa7" f="#fecc00" x1={89} x2={125} y1={62} y2={97.5} />],
  ["Switzerland", "8.341.600", "Bern", <><R f="#f00" /><R x={115.5} w={54} f="#fff" /><R x={53} y={53} w={179} h={54} f="#fff" /></>],
  ["Ukraine", "42.692.393", "Kiev", <Rows c={["#005bbb", "#ffd500"]} a={80} />],
  ["United Kingdom of Great Britain and Northern Ireland", "65.110.000", "London", <UKFlag />],
];

const Detail = ({ label, children }) => (
  <div className="flex gap-[3px]">
    <dt className="font-semibold">{label}:</dt>
    <dd className="font-light">{children}</dd>
  </div>
);

const CountryCard = ({ name, population, capital, flag }) => (
  <article className="flex flex-col overflow-hidden rounded bg-[#2b3945] shadow-[0_2px_10px_rgba(0,0,0,0.18)]">
    <svg viewBox="0 0 286 160" preserveAspectRatio="xMidYMid slice" role="img" aria-label={`Flag of ${name}`} className="aspect-[286/160] w-full">
      {flag}
    </svg>
    <div className="flex h-[123px] flex-col justify-center gap-2 px-4 pb-1.5">
      <h2 className="text-[11px] leading-[15px] font-extrabold">{name}</h2>
      <dl className="text-[10px] leading-4">
        <Detail label="Population">{population}</Detail>
        <Detail label="Region">Europe</Detail>
        <Detail label="Capital">{capital}</Detail>
      </dl>
    </div>
  </article>
);

const SearchIcon = () => (
  <svg viewBox="0 0 16 16" className="size-[11px]" aria-hidden="true">
    <path d="M10 10 L15 15" stroke="#5b646c" strokeWidth="1.800" strokeLinecap="round" />
    <circle cx="6.500" cy="6.500" r="5.600" fill="#64b5f6" stroke="#757575" strokeWidth="1.400" />
    <path d="M4 4.500 Q6.500 2.500 9 4.500" stroke="#bbdefb" strokeWidth="1" fill="none" />
  </svg>
);

export default function App() {
  return (
    <div className="flex min-h-screen flex-col bg-[#202c37] font-['Nunito_Sans','Nunito','Lato',sans-serif] text-white">
      <header className="flex h-[55px] items-center justify-between bg-[#2b3945] px-[55px] shadow-[0_2px_10px_rgba(0,0,0,0.18)]">
        <h1 className="text-[16px] leading-5 font-extrabold">Where in the world?</h1>
        <button type="button" className="flex items-center gap-2 text-[11px] leading-4">
          <FaMoon className="size-[10px]" aria-hidden="true" />
          Dark Mode
        </button>
      </header>

      <main className="flex flex-1 flex-col px-[55px] pt-[41px] pb-[44px]">
        <div className="flex items-center justify-between">
          <label className="flex h-[34px] w-[328px] items-center gap-[14px] rounded bg-[#2b3945] px-[15px] shadow-[0_2px_10px_rgba(0,0,0,0.18)]">
            <SearchIcon />
            <input
              type="text"
              aria-label="Search for a country"
              placeholder="Search for a country..."
              className="min-w-0 flex-1 bg-transparent text-[10px] leading-4 outline-none placeholder:text-white placeholder:opacity-100"
            />
          </label>
          <div className="relative w-[123px] rounded bg-[#2b3945] shadow-[0_2px_10px_rgba(0,0,0,0.18)]">
            <select aria-label="Filter by region" defaultValue="Europe" className="h-[34px] w-full appearance-none bg-transparent px-[14px] text-[10px] leading-4 outline-none">
              <option>Africa</option>
              <option>Americas</option>
              <option>Asia</option>
              <option>Europe</option>
              <option>Oceania</option>
            </select>
            <svg viewBox="0 0 10 6" className="pointer-events-none absolute top-[13px] right-[19px] h-1 w-[7px]" aria-hidden="true">
              <path d="M0 0 H10 L5 6Z" fill="#fff" />
            </svg>
          </div>
        </div>

        <section className="mt-[34px] grid flex-1 grid-cols-4 content-between gap-x-[49px] gap-y-12" aria-label="Countries">
          {countries.map(([name, population, capital, flag]) => (
            <CountryCard key={name} name={name} population={population} capital={capital} flag={flag} />
          ))}
        </section>
      </main>
    </div>
  );
}
